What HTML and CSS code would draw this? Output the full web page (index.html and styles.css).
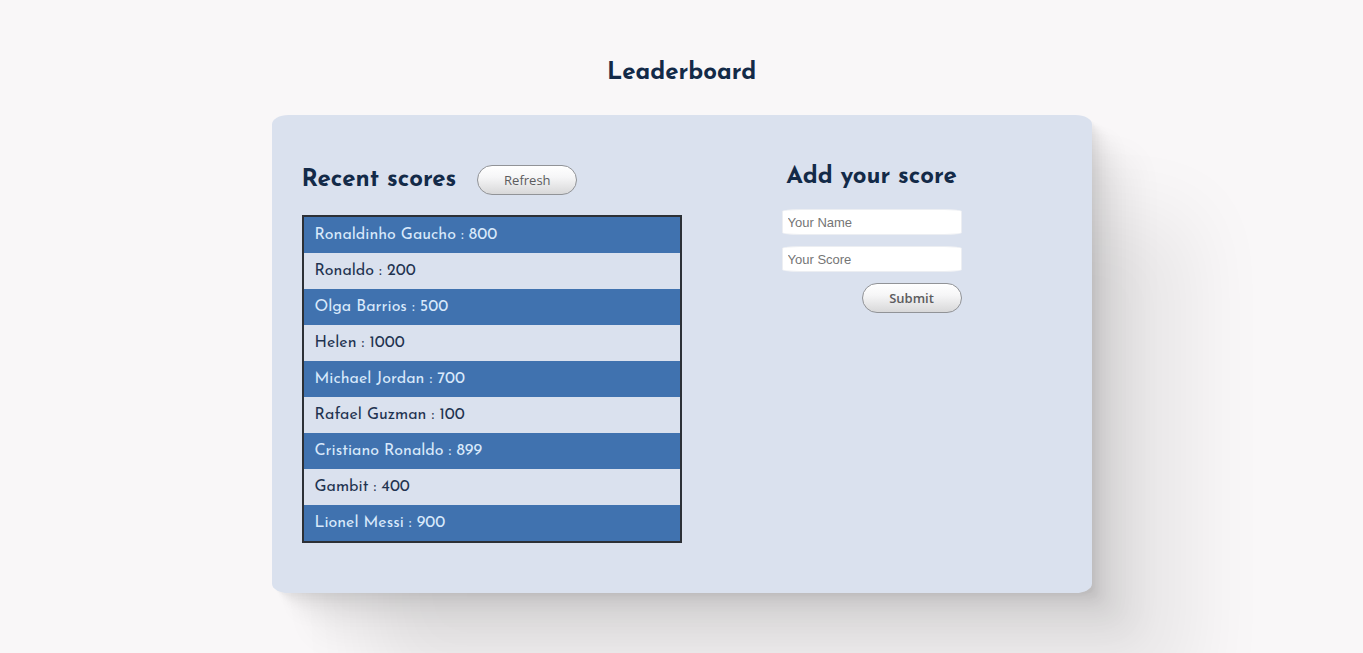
FILE: index.html
```html
<!DOCTYPE html>
<html lang="en">
<head>
<meta charset="utf-8">
<meta name="viewport" content="width=device-width, initial-scale=1">
<title>Leaderboard</title>
<link rel="stylesheet" href="styles.css">
</head>
<body>
<h1 class="title">Leaderboard</h1>
<main class="panel">
  <section class="recent">
    <div class="recent-header">
      <h2 class="heading">Recent scores</h2>
      <button class="button" type="button">Refresh</button>
    </div>
    <ul class="scores">
      <li class="score">Ronaldinho Gaucho : 800</li>
      <li class="score">Ronaldo : 200</li>
      <li class="score">Olga Barrios : 500</li>
      <li class="score">Helen : 1000</li>
      <li class="score">Michael Jordan : 700</li>
      <li class="score">Rafael Guzman : 100</li>
      <li class="score">Cristiano Ronaldo : 899</li>
      <li class="score">Gambit : 400</li>
      <li class="score">Lionel Messi : 900</li>
    </ul>
  </section>
  <section class="add">
    <h2 class="heading">Add your score</h2>
    <form class="form">
      <input class="field" type="text" placeholder="Your Name" aria-label="Your Name">
      <input class="field" type="text" placeholder="Your Score" aria-label="Your Score">
      <button class="button submit" type="button">Submit</button>
    </form>
  </section>
</main>
</body>
</html>
```
FILE: styles.css
```css
* {
  box-sizing: border-box;
}

body {
  margin: 0;
  padding: 58px 20px 60px;
  background: #f9f7f8;
  color: #132a48;
  font-family: "Josefin Sans", Lato, sans-serif;
}

.title,
.heading {
  margin: 0;
  font-size: 24px;
  font-weight: 700;
  line-height: 30px;
}

.title {
  margin-bottom: 27px;
  text-align: center;
}

.panel {
  display: grid;
  grid-template-columns: 1fr 1fr;
  max-width: 820px;
  margin: 0 auto;
  padding: 50px 30px;
  border-radius: 2%;
  background: #dae1ee;
  box-shadow:
    3px 3px 2px rgba(0, 0, 0, 0.02),
    7px 7px 5px rgba(0, 0, 0, 0.028),
    12px 12px 10px rgba(0, 0, 0, 0.035),
    22px 22px 18px rgba(0, 0, 0, 0.042),
    42px 42px 33px rgba(0, 0, 0, 0.05),
    100px 100px 80px rgba(0, 0, 0, 0.07);
}

.recent-header {
  display: flex;
  align-items: center;
  gap: 21px;
  margin-bottom: 20px;
}

.button {
  width: 100px;
  height: 30px;
  padding: 0;
  border: 1px solid #919397;
  border-radius: 15px;
  background: linear-gradient(#ffffff, #f6f6f7 40%, #d8d8d9);
  color: #5c5c5e;
  font: 500 13px "Open Sans", "Noto Sans", sans-serif;
  cursor: pointer;
}

.scores {
  margin: 0;
  padding: 0;
  border: 2px solid #2c3036;
  list-style: none;
}

.score {
  padding: 0 11px;
  color: #1f3350;
  font-size: 16px;
  font-weight: 400;
  line-height: 36px;
}

.score:nth-child(odd) {
  background: #4072af;
  color: #d9e9fb;
}

.add {
  display: flex;
  flex-direction: column;
  align-items: center;
  gap: 17px;
  margin-top: -3px;
}

.form {
  display: flex;
  flex-direction: column;
  gap: 11px;
  width: 180px;
}

.field {
  width: 100%;
  height: 26px;
  padding: 0 5px;
  border: 1px solid #eceef2;
  border-radius: 10%;
  background: #ffffff;
  font: 13px "Liberation Sans", Arial, sans-serif;
}

.field::placeholder {
  color: #757575;
}

.submit {
  align-self: flex-end;
  font-weight: 600;
}

@media (min-width: 900px) {
  body {
    min-height: 100vh;
    overflow: hidden;
  }
}
```
